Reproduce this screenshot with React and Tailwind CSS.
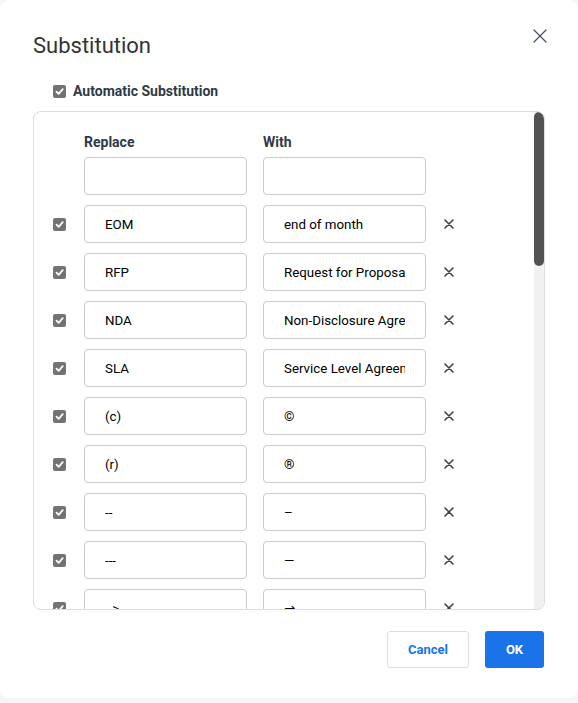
import React from 'react';

const rows = [
  { from: 'EOM', to: 'end of month' },
  { from: 'RFP', to: 'Request for Proposal' },
  { from: 'NDA', to: 'Non-Disclosure Agreement' },
  { from: 'SLA', to: 'Service Level Agreement' },
  { from: '(c)', to: '©' },
  { from: '(r)', to: '®' },
  { from: '--', to: '–' },
  { from: '---', to: '—' },
  { from: '-->', to: '→' },
  { from: '<--', to: '←' },
  { from: '=>', to: '⇒' },
];

const Check = () => (
  <div className="w-[13px] h-[13px] rounded-[2px] bg-[#737373] flex items-center justify-center">
    <svg width="9" height="9" viewBox="0 0 10 10" fill="none">
      <path d="M1.6 5.2 L4 7.6 L8.6 2.4" stroke="#fff" strokeWidth="1.9" strokeLinecap="round" strokeLinejoin="round" />
    </svg>
  </div>
);

const Field = ({ value }) => (
  <input
    readOnly
    value={value}
    className="w-[163px] h-[38px] border border-[#cccccc] rounded-[4px] px-[20px] text-[13.33px] text-black bg-white outline-none"
    style={{ fontFamily: 'Roboto, "DejaVu Sans", "Liberation Sans", sans-serif' }}
  />
);

const SmallX = () => (
  <svg width="10" height="10" viewBox="0 0 10 10" fill="none">
    <path d="M1 1 L9 9 M9 1 L1 9" stroke="#39424f" strokeWidth="1.6" strokeLinecap="round" />
  </svg>
);

export default function App() {
  return (
    <div className="w-[578px] h-[703px] bg-[#f6f6f6]" style={{ fontFamily: 'Roboto, "Liberation Sans", sans-serif' }}>
      <div className="w-[578px] h-[698px] bg-white rounded-[10px] pt-[32px] px-[33px] flex flex-col">
        {/* header */}
        <div className="flex justify-between items-start">
          <h1 className="text-[22px] leading-[28px] text-[#333333] font-normal">Substitution</h1>
          <button className="w-[16px] h-[16px] mt-[-4px] mr-[-3px] flex items-center justify-center">
            <svg width="14" height="14" viewBox="0 0 14 14" fill="none">
              <path d="M1 1 L13 13 M13 1 L1 13" stroke="#4a5361" strokeWidth="1.3" strokeLinecap="round" />
            </svg>
          </button>
        </div>

        {/* automatic toggle */}
        <label className="mt-[21px] pl-[20px] flex items-center gap-[7px] h-[20px]">
          <Check />
          <span className="text-[14px] font-bold text-[#2f3a48]">Automatic Substitution</span>
        </label>

        {/* table panel */}
        <div className="mt-[10px] h-[499px] border border-[#dddddd] rounded-[8px] flex overflow-hidden">
          <div className="flex-1 overflow-hidden pt-[20px]">
            <div className="flex h-[20px] items-center">
              <div className="w-[50px]" />
              <div className="w-[163px] text-[14px] font-bold text-[#2f3a48]">Replace</div>
              <div className="w-[16px]" />
              <div className="w-[163px] text-[14px] font-bold text-[#2f3a48]">With</div>
            </div>
            <div className="flex flex-col gap-[10px] mt-[5px]">
              <div className="flex items-center">
                <div className="w-[50px]" />
                <Field value="" />
                <div className="w-[16px]" />
                <Field value="" />
              </div>
              {rows.map((r) => (
                <div key={r.from} className="flex items-center">
                  <div className="w-[50px] flex justify-center pl-[1px]">
                    <Check />
                  </div>
                  <Field value={r.from} />
                  <div className="w-[16px]" />
                  <Field value={r.to} />
                  <div className="w-[46px] flex justify-center">
                    <SmallX />
                  </div>
                </div>
              ))}
            </div>
          </div>
          {/* scrollbar */}
          <div className="w-[10px] bg-[#f1f1f1] flex flex-col">
            <div className="h-[154px] bg-[#525252] rounded-[5px]" />
          </div>
        </div>

        {/* footer */}
        <div className="mt-[21px] mr-[1px] flex justify-end gap-[16px]">
          <button className="w-[82px] h-[37px] border border-[#dddddd] rounded-[3px] text-[13px] font-bold text-[#1a73e8] bg-white">
            Cancel
          </button>
          <button className="w-[59px] h-[37px] rounded-[3px] text-[13px] font-bold text-white bg-[#1a73e8]">
            OK
          </button>
        </div>
      </div>
    </div>
  );
}
